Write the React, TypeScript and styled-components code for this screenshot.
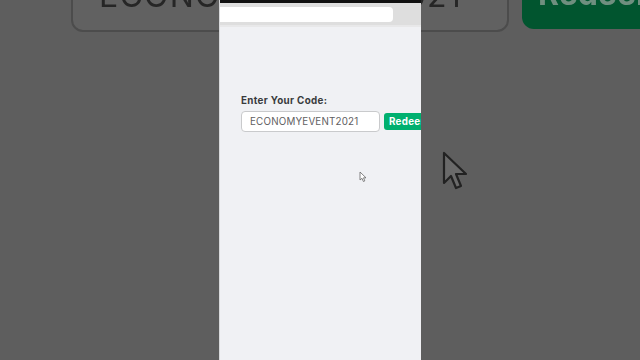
import React from "react";
import styled, { createGlobalStyle } from "styled-components";

const Global = createGlobalStyle`
  html, body { margin: 0; padding: 0; background: #5e5e5e; }
  #root { width: 640px; height: 360px; }
`;

const Page = styled.div`
  position: relative;
  width: 640px;
  height: 360px;
  overflow: hidden;
  background: #5e5e5e;
  display: flex;
  padding-left: 219px;
  box-sizing: border-box;
  font-family: "Inter", "Lato", "Liberation Sans", sans-serif;
`;

const Backdrop = styled.div`
  position: absolute;
  inset: 0;
  filter: blur(0.6px);
`;

const BigInput = styled.div`
  position: absolute;
  left: 71px;
  top: -42px;
  width: 438px;
  height: 74px;
  border: 2px solid #4c4c4c;
  border-radius: 12px;
  background: #616161;
  box-sizing: border-box;
  display: flex;
  align-items: center;
  padding-left: 26px;
  font-size: 32px;
  letter-spacing: 1.2px;
  color: #262626;
  white-space: nowrap;
`;

const BigButton = styled.div`
  position: absolute;
  left: 522px;
  top: -42px;
  width: 160px;
  height: 71px;
  border-radius: 12px;
  background: #01552f;
  display: flex;
  align-items: center;
  padding-left: 16px;
  box-sizing: border-box;
  font-size: 32px;
  font-weight: 700;
  color: #6f8f7f;
`;

const BigCursor = styled.svg`
  position: absolute;
  left: 441px;
  top: 150px;
`;

const Phone = styled.div`
  position: relative;
  z-index: 1;
  width: 202px;
  height: 360px;
  display: flex;
  flex-direction: column;
  background: #f0f1f4;
  border-left: 1px solid #d8d9db;
  box-sizing: border-box;
`;

const TopEdge = styled.div`
  height: 3px;
  background: #111;
`;

const Toolbar = styled.div`
  height: 22px;
  background: #dedede;
  display: flex;
  align-items: center;
  border-bottom: 2px solid #e8e8e9;
`;

const Address = styled.div`
  width: 173px;
  height: 15px;
  background: #ffffff;
  border-radius: 0 4px 4px 0;
`;

const Content = styled.div`
  position: relative;
  flex: 1;
  padding: 68px 0 0 21px;
  display: flex;
  flex-direction: column;
  overflow: hidden;
`;

const Label = styled.div`
  font-size: 9.8px;
  font-weight: 700;
  letter-spacing: 0.35px;
  color: #393b3d;
  margin-bottom: 4px;
  line-height: 12px;
`;

const Row = styled.div`
  display: flex;
  align-items: center;
  gap: 4px;
`;

const CodeInput = styled.div`
  flex-shrink: 0;
  width: 139px;
  height: 21px;
  box-sizing: border-box;
  border: 1px solid #c9cacc;
  border-radius: 4px;
  background: #fff;
  display: flex;
  align-items: center;
  padding-left: 8px;
  font-size: 9.8px;
  letter-spacing: 0.2px;
  color: #5f6062;
  white-space: nowrap;
`;

const RedeemButton = styled.div`
  flex-shrink: 0;
  height: 17px;
  padding: 0 8px 0 5px;
  border-radius: 3px;
  background: #00b06f;
  color: #fff;
  font-size: 9.8px;
  font-weight: 700;
  letter-spacing: 0.3px;
  display: flex;
  align-items: center;
`;

const SmallCursor = styled.svg`
  position: absolute;
  left: 139px;
  top: 144px;
`;

export default function App() {
  return (
    <>
      <Global />
      <Page>
        <Backdrop>
          <BigInput>ECONOMYEVENT2021</BigInput>
          <BigButton>Redeem</BigButton>
          <BigCursor width="30" height="42" viewBox="0 0 30 42">
            <path
              d="M3 3 L3 33 L10 26 L15 38 L20 36 L15 24 L25 24 Z"
              fill="#6a6a6a"
              stroke="#222"
              strokeWidth="2.2"
              strokeLinejoin="round"
            />
          </BigCursor>
        </Backdrop>
        <Phone>
          <TopEdge />
          <Toolbar>
            <Address />
          </Toolbar>
          <Content>
            <Label>Enter Your Code:</Label>
            <Row>
              <CodeInput>ECONOMYEVENT2021</CodeInput>
              <RedeemButton>Redeem</RedeemButton>
            </Row>
            <SmallCursor width="9" height="12" viewBox="0 0 9 12">
              <path
                d="M1 1 L1 9 L3 7.3 L4.4 10.5 L5.8 9.9 L4.5 6.8 L7 6.8 Z"
                fill="#fff"
                stroke="#666"
                strokeWidth="0.8"
                strokeLinejoin="round"
              />
            </SmallCursor>
          </Content>
        </Phone>
      </Page>
    </>
  );
}
